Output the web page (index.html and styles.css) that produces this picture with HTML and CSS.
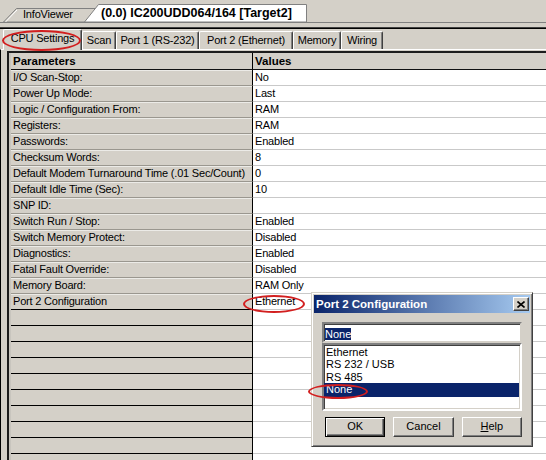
FILE: index.html
```html
<!DOCTYPE html>
<html>
<head>
<meta charset="utf-8">
<link rel="stylesheet" href="styles.css">
</head>
<body>
<div class="app">
  <div class="doc-strip">
    <div class="doc-tab info">
      <svg class="tab-shape" width="100" height="14" viewBox="0 0 100 14"><polygon points="0.5,14 13.5,0.5 100,0.5 100,14" fill="#d4d0c8" stroke="#808080" stroke-width="1"/><line x1="2.5" y1="14" x2="14" y2="2" stroke="#ffffff" stroke-width="1"/></svg>
      <span class="doc-label">InfoViewer</span>
    </div>
    <div class="doc-tab active">
      <svg class="tab-shape" width="223" height="18" viewBox="0 0 223 18"><polygon points="0.5,18 14.5,0.5 222.5,0.5 222.5,18" fill="#ffffff" stroke="#808080" stroke-width="1"/></svg>
      <span class="doc-label bold">(0.0) IC200UDD064/164 [Target2]</span>
    </div>
  </div>
  <div class="rule"></div>
  <div class="prop-tabs">
    <div class="ptab sel w-cpu">CPU Settings</div>
    <div class="ptab w-scan">Scan</div>
    <div class="ptab w-p1">Port 1 (RS-232)</div>
    <div class="ptab w-p2">Port 2 (Ethernet)</div>
    <div class="ptab w-mem">Memory</div>
    <div class="ptab w-wir">Wiring</div>
  </div>
  <div class="panel">
    <div class="grid">
      <div class="row head"><div class="p">Parameters</div><div class="v">Values</div></div>
      <div class="row"><div class="p">I/O Scan-Stop:</div><div class="v">No</div></div>
      <div class="row"><div class="p">Power Up Mode:</div><div class="v">Last</div></div>
      <div class="row"><div class="p">Logic / Configuration From:</div><div class="v">RAM</div></div>
      <div class="row"><div class="p">Registers:</div><div class="v">RAM</div></div>
      <div class="row"><div class="p">Passwords:</div><div class="v">Enabled</div></div>
      <div class="row"><div class="p">Checksum Words:</div><div class="v">8</div></div>
      <div class="row"><div class="p">Default Modem Turnaround Time (.01 Sec/Count)</div><div class="v">0</div></div>
      <div class="row"><div class="p">Default Idle Time (Sec):</div><div class="v">10</div></div>
      <div class="row"><div class="p">SNP ID:</div><div class="v"></div></div>
      <div class="row"><div class="p">Switch Run / Stop:</div><div class="v">Enabled</div></div>
      <div class="row"><div class="p">Switch Memory Protect:</div><div class="v">Disabled</div></div>
      <div class="row"><div class="p">Diagnostics:</div><div class="v">Enabled</div></div>
      <div class="row"><div class="p">Fatal Fault Override:</div><div class="v">Disabled</div></div>
      <div class="row"><div class="p">Memory Board:</div><div class="v">RAM Only</div></div>
      <div class="row last"><div class="p">Port 2 Configuration</div><div class="v">Ethernet</div></div>
      <div class="row empty"><div class="p"></div><div class="v"></div></div>
      <div class="row empty"><div class="p"></div><div class="v"></div></div>
      <div class="row empty"><div class="p"></div><div class="v"></div></div>
      <div class="row empty"><div class="p"></div><div class="v"></div></div>
      <div class="row empty"><div class="p"></div><div class="v"></div></div>
      <div class="row empty"><div class="p"></div><div class="v"></div></div>
      <div class="row empty"><div class="p"></div><div class="v"></div></div>
      <div class="row empty"><div class="p"></div><div class="v"></div></div>
      <div class="row empty"><div class="p"></div><div class="v"></div></div>
      <div class="row empty"><div class="p"></div><div class="v"></div></div>
    </div>
  </div>

  <div class="dialog">
    <div class="titlebar">
      <span class="title">Port 2 Configuration</span>
      <span class="close"><svg width="8" height="7" viewBox="0 0 8 7"><path d="M0.5 0.5 L7.5 6.5 M7.5 0.5 L0.5 6.5" stroke="#000" stroke-width="1.6" fill="none"/></svg></span>
    </div>
    <div class="dlg-body">
      <div class="edit"><span class="selected">None</span></div>
      <div class="listbox">
        <div class="item">Ethernet</div>
        <div class="item">RS 232 / USB</div>
        <div class="item">RS 485</div>
        <div class="item hl">None</div>
      </div>
      <div class="buttons">
        <div class="btn default">OK</div>
        <div class="btn">Cancel</div>
        <div class="btn"><u>H</u>elp</div>
      </div>
    </div>
  </div>

  <div class="ring ring-cpu"></div>
  <div class="ring ring-eth"></div>
  <div class="ring ring-none"></div>
</div>
</body>
</html>
```
FILE: styles.css
```css
html, body {
  margin: 0;
  padding: 0;
  background: #d4d0c8;
}
body {
  font-family: "Liberation Sans", Arial, sans-serif;
  font-size: 11px;
  color: #000;
}
.app {
  position: relative;
  width: 546px;
  height: 460px;
  overflow: hidden;
  background: #d4d0c8;
}

/* document tabs */
.doc-strip {
  height: 22px;
  display: flex;
  align-items: flex-end;
  border-bottom: 1px solid #808080;
}
.doc-tab {
  position: relative;
  flex: none;
}
.tab-shape {
  position: absolute;
  left: 0;
  top: 0;
  display: block;
}
.doc-label {
  position: relative;
  display: block;
  white-space: nowrap;
}
.doc-tab.info {
  margin-left: 3px;
  width: 100px;
  height: 14px;
}
.doc-tab.info .doc-label {
  padding-left: 20px;
  line-height: 13px;
  letter-spacing: -0.2px;
}
.doc-tab.active {
  margin-left: -19px;
  width: 223px;
  height: 18px;
}
.doc-label.bold {
  font-weight: bold;
  font-size: 12.5px;
  padding-left: 17px;
  padding-top: 1px;
  line-height: 16px;
}

.rule {
  margin-top: 4px;
  height: 0;
  border-top: 1px solid #404040;
  border-bottom: 1px solid #000;
}

/* property tabs */
.prop-tabs {
  height: 20px;
  display: flex;
  align-items: flex-end;
  padding-left: 3px;
}
.ptab {
  box-sizing: border-box;
  height: 18px;
  background: #d4d0c8;
  border-top: 1px solid #fff;
  border-left: 1px solid #fff;
  border-right: 1px solid #404040;
  box-shadow: inset -1px 0 0 #808080;
  border-radius: 2px 2px 0 0;
  padding-top: 2px;
  line-height: 13px;
  text-align: center;
  white-space: nowrap;
  letter-spacing: -0.2px;
}
.ptab.sel {
  position: relative;
  z-index: 1;
  margin-bottom: -1px;
  height: 21px;
}
.w-cpu { width: 79px; }
.w-scan { width: 34px; }
.w-p1 { width: 83px; }
.w-p2 { width: 94px; }
.w-mem { width: 48px; }
.w-wir { width: 42px; }

/* panel & grid */
.panel {
  border-top: 1px solid #fff;
  border-left: 1px solid #000;
  padding: 1px 0 0 6px;
}
.grid {
  border-top: 2px solid #1c1c1c;
  border-left: 2px solid #1c1c1c;
  box-shadow: inset 2px 0 0 #c8c5be;
  padding-left: 2px;
}
.row {
  display: flex;
  height: 16px;
}
.p, .v {
  box-sizing: border-box;
  height: 16px;
  line-height: 15px;
  white-space: nowrap;
  overflow: hidden;
  letter-spacing: -0.2px;
}
.p {
  width: 242px;
  flex: none;
  padding-left: 2px;
  background: #d4d0c8;
  border-right: 1px solid #000;
  border-bottom: 1px solid #9a978f;
  box-shadow: inset 0 1px 0 #ecebe7;
}
.v {
  flex: 1;
  padding-left: 2px;
  background: #fff;
  border-bottom: 1px solid #c9c9c9;
}
.row.head {
  height: 17px;
}
.row.head .p, .row.head .v {
  background: #d4d0c8;
  font-weight: bold;
  font-size: 11.5px;
  letter-spacing: 0;
  border-bottom: 1px solid #111;
  height: 17px;
  line-height: 16px;
  box-shadow: none;
}
.row.last .p,
.row.empty .p {
  border-bottom: 1px solid #000;
}
.row.empty .p {
  box-shadow: none;
}

/* dialog */
.dialog {
  position: absolute;
  z-index: 3;
  left: 311px;
  top: 292px;
  width: 222px;
  height: 155px;
  box-sizing: border-box;
  background: #d4d0c8;
  border: 1px solid;
  border-color: #d4d0c8 #404040 #404040 #d4d0c8;
  box-shadow: inset 1px 1px 0 #fff, inset -1px -1px 0 #808080;
  padding: 2px;
}
.titlebar {
  height: 18px;
  display: flex;
  align-items: center;
  justify-content: space-between;
  background: linear-gradient(to right, #0a246a, #a6caf0);
  color: #fff;
  padding-left: 2px;
  padding-right: 1px;
}
.title {
  font-weight: bold;
  font-size: 11.5px;
  white-space: nowrap;
}
.close {
  box-sizing: border-box;
  width: 16px;
  height: 14px;
  background: #d4d0c8;
  border: 1px solid;
  border-color: #fff #404040 #404040 #fff;
  box-shadow: inset -1px -1px 0 #808080;
  display: flex;
  align-items: center;
  justify-content: center;
}
.close svg { display: block; }
.dlg-body {
  padding: 9px 8px 0 8px;
}
.edit {
  box-sizing: border-box;
  height: 21px;
  background: #fff;
  border: 2px solid;
  border-color: #808080 #d4d0c8 #d4d0c8 #808080;
  box-shadow: inset 1px 1px 0 #404040;
  padding: 4px 0 0 1px;
  line-height: 12px;
}
.selected {
  background: #0a246a;
  color: #fff;
}
.listbox {
  box-sizing: border-box;
  height: 68px;
  background: #fff;
  border: 2px solid;
  border-color: #808080 #fff #fff #808080;
  box-shadow: inset 1px 1px 0 #404040, inset -1px -1px 0 #d4d0c8;
  padding-top: 1px;
}
.item {
  height: 12.4px;
  line-height: 12.4px;
  padding-left: 2px;
  white-space: nowrap;
}
.item.hl {
  background: #0a246a;
  color: #fff;
  height: 13.4px;
  line-height: 13px;
  margin: 0 1px 0 0;
}
.buttons {
  display: flex;
  gap: 8px;
  margin-top: 6px;
  margin-left: 3px;
}
.btn {
  box-sizing: border-box;
  width: 62px;
  height: 20px;
  background: #d4d0c8;
  border: 1px solid;
  border-color: #fff #404040 #404040 #fff;
  box-shadow: inset -1px -1px 0 #808080;
  text-align: center;
  line-height: 17px;
  font-size: 11px;
}
.btn.default {
  border: 1px solid #000;
  box-shadow: inset 1px 1px 0 #fff, inset -1px -1px 0 #404040, inset -2px -2px 0 #808080;
}

/* red annotation rings */
.ring {
  position: absolute;
  z-index: 5;
  box-sizing: border-box;
  border: 2px solid #d21f1f;
  border-radius: 50%;
}
.ring-cpu { left: 2px; top: 30px; width: 79px; height: 21px; }
.ring-eth { left: 243px; top: 295px; width: 62px; height: 18px; }
.ring-none { left: 308px; top: 384px; width: 60px; height: 15px; }
```
